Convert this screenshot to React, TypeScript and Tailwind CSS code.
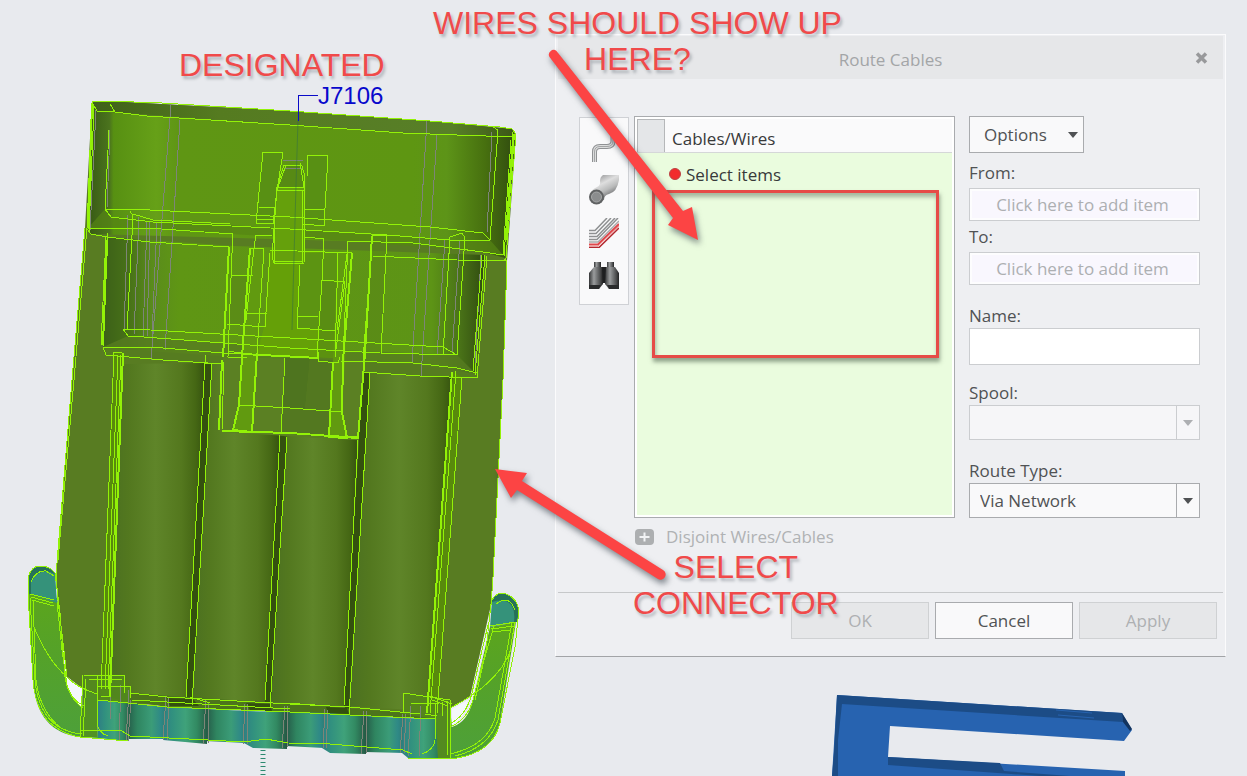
import { useState } from "react";
import type { ReactNode } from "react";

// front-facing edges of the connector, drawn in the highlight green
const EDGES = [
  // silhouette
  "M85 228 L72 380 L56 575 L58 600 L67 677 Q76 687 97 694",
  "M87 228 L74 380 L58 560",
  "M507 261 L503 380 L493 577 L491 605",
  // upper shell
  "M92 102 L106 101 L162 103 L290 111 L430 121 L500 127 L512 129 L516 134 L506 258 L504 261",
  "M92 102 L97 111 L115 112 L147 116 L290 125 L403 133 L457 135 L515 137",
  "M110 104 L115 112 M92 103 L87 229 L91 234 L107 237 L150 242 L229 247",
  "M94 106 L89 232 M88 228 L147 228 L233 234",
  "M110 104 L115 112 M109 130 L105 209 L111 217 L153 222 L290 229 L387 235 L450 240 L490 240 L498 130 L493 127",
  "M105 209 L130 209 L290 217 L430 227 L483 233 L490 240",
  "M513 132 L504 256 M511 140 L503 255",
  "M348 241 L413 243 L483 252 L503 255 M373 256 L457 260 L507 261",
  // lower shell
  "M108 233 L103 347 L106 355 L163 360 L223 364 M106 237 L101 345",
  "M103 347 L163 348 L223 353 L290 356 L318 358",
  "M130 211 L133 216 L127 330 M123 329 L128 336 L144 337 L290 348 L380 353 L457 355 L465 237",
  "M133 214 L153 220 L230 224 M123 329 L133 329 L290 338 L443 347 L457 355",
  "M450 237 L462 233 L465 238 M450 237 L443 355",
  "M485 255 L475 375 M482 255 L473 371 M487 256 L477 378 L420 376 L362 372 M340 361 L413 363 L457 368 L477 373",
  // latch window
  "M233 234 L232 253 L228 357 L247 358 M232 275 L253 276 M247 313 L267 313 M227 324 L265 327 L270 253 M228 351 L247 354",
  "M272 236 L256 235 L254 248 L246 320 M250 248 L264 249 L257 353 M270 250 L352 253",
  "M263 152 L283 153 L277 190 L273 224 L256 223 Z M259 207 L276 208 M256 219 L273 220",
  "M308 155 L328 156 L324 226 L303 224 M308 155 L307 177 M304 209 L325 210",
  "M284 165 L302 166 L305 177 L304 264 L274 263 L272 257 L277 187 Z M277 187 L304 188 M277 190 L304 190 M286 165 L278 187 M300 163 L304 187 M275 261 L303 262",
  "M274 225 L275 263 M302 190 L302 263 M305 237 L324 239 L322 280 L345 282 L335 357 M300 265 L297 328 L335 331 M298 316 L318 317 M322 280 L317 357",
  "M338 253 L335 358 M347 254 L337 330 M348 241 L343 360",
  "M318 352 L318 361 L338 363 L340 357 M387 235 L381 353 M372 235 L387 235 M371 256 L363 360",
  // latch housing
  "M224 362 L222 430 L358 437 M239 405 L290 408 L342 412",
  "M285 358 L281 433 M206 355 L205 363 L223 364",
  // bores
  "M114 352 L101 690 M118 355 L105 690 M121 355 L108 690 M113 352 L122 352 M101 696 L109 697",
  "M205 363 L186 697 M212 363 L192 705 M280 435 L265 700 M287 437 L270 708",
  "M358 440 L344 705 M370 373 L349 715 M456 371 L430 713 M462 377 L437 713",
  // foot rail
  "M98 700 L167 707 L290 712 L350 715 L435 719 M130 693 L167 697 L290 704 L350 707 L420 714",
  "M132 700 L290 709 M190 697 L210 703 M285 703 L330 706",
  "M80 730 L122 731 L130 736 L208 740 L244 742 L266 739 L288 743 L330 744 L403 750 L412 754",
  "M83 675 L124 676 L124 693 M83 675 L80 737 M86 679 L83 736 M97 675 L97 722 Q98 733 108 736 M101 679 L116 680",
  "M88 679 L122 680 M98 686 L131 686 L130 698 M109 676 L109 696",
  "M403 693 L450 700 L450 758 M403 693 L403 712 M411 703 L439 704 M436 704 L435 740 Q434 750 422 754 M447 701 L447 755 M425 714 L437 716",
  "M430 696 L452 704 M432 700 L448 706 M442 702 L442 716",
];

// edges that run double and read as one heavier line
const HEAVY_EDGES = [
  "M92 104 L88 228 M514 134 L506 240 M107 240 L103 345",
  "M229 247 L223 357 M250 248 L242 357 L239 405 L233 430 L252 432 L257 353",
  "M352 253 L343 360 L342 412 L347 438 L329 437 L333 362",
  "M243 354 L318 358 M222 431 L290 433 L358 438 L365 353 L372 236",
  "M222 360 L219 430 M123 353 L110 697 M452 372 L427 713",
];

const CLIP_EDGES = [
  "M28 578 Q31 566 40 566 Q50 566 55 573 L60 613 L65 677 Q68 698 83 708",
  "M28 578 L28 593 L33 680 Q36 716 57 728 Q67 735 80 737 L128 741",
  "M30 598 L35 680 Q38 714 59 727 Q70 733 82 734 M33 600 L36 680 Q40 712 62 729",
  "M57 602 L62 650 L67 685 Q71 700 84 706 M31 582 Q36 570 46 571 L54 576",
  "M30 594 L54 600 M31 597 L53 603 M32 600 L54 606 M34 627 Q48 661 67 677",
  "M492 600 Q496 593 503 593 Q516 596 519 610 L515 647 L500 723 Q493 752 457 758 L408 758",
  "M515 622 L498 720 Q489 748 455 756 M512 622 L495 718 Q487 746 450 754",
  "M491 604 L486 650 L473 700 Q467 720 450 727 M488 625 L471 697 Q465 716 451 723 M494 626 L484 660 L475 700",
  "M490 626 L516 622 M491 629 L514 626 M492 632 L511 630 M511 650 Q498 684 450 708 M496 604 Q509 594 515 610",
];

const SEAMS = [
  "M171 104 L151 360 M180 120 L165 350",
  "M147 222 L143 337 M150 222 L147 337 M157 222 L152 337 M139 217 L134 335",
  "M128 215 L124 330 M96 110 L90 230 M110 130 L107 208",
  "M427 120 L412 363 M437 135 L421 376 M445 240 L437 355 M460 240 L452 352 M492 132 L487 232 M481 255 L475 370",
  "M283 160 L303 161 M284 168 L302 169",
];

const RAIL_SEAMS = [
  "M111 690 L110 720 M121 685 L119 741 M131 700 L128 741 M129 690 L126 741 M166 697 L163 740 M169 698 L167 740 M206 700 L203 744 M209 702 L208 744",
  "M245 704 L243 744 M248 704 L247 745 M285 706 L282 748 M288 706 L287 748 M325 709 L323 748 M328 710 L326 748",
  "M364 711 L361 754 M367 711 L366 754 M403 714 L400 753 M406 714 L404 753 M411 706 L408 756 M421 706 L419 757",
];

const BORES = [
  "M123 364 L205 363 L186 699 L110 695 Z",
  "M212 364 L222 364 L219 432 L280 435 L265 702 L192 699 Z",
  "M287 436 L358 440 L344 706 L271 702 Z",
  "M370 373 L453 377 L427 711 L349 706 Z",
];

// protruding and recessed faces alternate along the rail
const LOBES = [
  "M98 700 L131 703 L128 741 L98 738 Z",
  "M166 707 L208 709 L207 744 L163 740 Z",
  "M246 711 L287 712 L287 749 L253 748 L244 743 Z",
  "M325 713 L366 716 L366 754 L330 753 L322 748 Z",
  "M404 718 L436 719 L445 758 L408 758 L402 753 Z",
];

const RECESSES = [
  "M130 703 L168 707 L165 739 L127 739 Z",
  "M207 709 L248 711 L245 743 L206 741 Z",
  "M286 712 L327 713 L324 748 L286 746 Z",
  "M365 716 L405 718 L404 753 L365 752 Z",
];

function Connector() {
  return (
    <svg width="555" height="776" viewBox="0 0 555 776" className="block" aria-label="Connector J7106">
      <defs>
        <linearGradient id="bore" x1="0" x2="1" y1="0" y2="0">
          <stop offset="0" stopColor="#4b7020" />
          <stop offset="0.2" stopColor="#53781f" />
          <stop offset="0.48" stopColor="#5f8529" />
          <stop offset="0.75" stopColor="#54781e" />
          <stop offset="0.9" stopColor="#456714" />
          <stop offset="1" stopColor="#355210" />
        </linearGradient>
        <linearGradient id="shell" x1="0" x2="1" y1="0" y2="0">
          <stop offset="0" stopColor="#375a14" />
          <stop offset="0.05" stopColor="#4b731e" />
          <stop offset="0.06" stopColor="#579012" />
          <stop offset="0.16" stopColor="#66a018" />
          <stop offset="0.21" stopColor="#5f9614" />
          <stop offset="0.76" stopColor="#5e9612" />
          <stop offset="0.84" stopColor="#5d9418" />
          <stop offset="0.93" stopColor="#47700f" />
          <stop offset="1" stopColor="#314c10" />
        </linearGradient>
        <linearGradient id="shellLow" x1="0" x2="1" y1="0" y2="0">
          <stop offset="0" stopColor="#3c6018" />
          <stop offset="0.07" stopColor="#487218" />
          <stop offset="0.13" stopColor="#5a8c1c" />
          <stop offset="0.2" stopColor="#5f9614" />
          <stop offset="0.86" stopColor="#5d9416" />
          <stop offset="0.93" stopColor="#4b7518" />
          <stop offset="1" stopColor="#304b10" />
        </linearGradient>
        <linearGradient id="rim" x1="0" x2="1" y1="0" y2="0">
          <stop offset="0" stopColor="#40601c" />
          <stop offset="0.05" stopColor="#42641a" />
          <stop offset="0.3" stopColor="#557b20" />
          <stop offset="0.85" stopColor="#587f28" />
          <stop offset="1" stopColor="#3b5716" />
        </linearGradient>
        <linearGradient id="lobe" x1="0" x2="1" y1="0" y2="0">
          <stop offset="0" stopColor="#2f7f84" />
          <stop offset="0.2" stopColor="#31907f" />
          <stop offset="0.5" stopColor="#3fa27a" />
          <stop offset="0.75" stopColor="#328a62" />
          <stop offset="1" stopColor="#255844" />
        </linearGradient>
        <linearGradient id="recess" x1="0" x2="1" y1="0" y2="0">
          <stop offset="0" stopColor="#255a48" />
          <stop offset="0.25" stopColor="#2f8560" />
          <stop offset="0.6" stopColor="#3b9c78" />
          <stop offset="0.82" stopColor="#2f8986" />
          <stop offset="1" stopColor="#2b7870" />
        </linearGradient>
        <linearGradient id="clip" x1="0" x2="0" y1="0" y2="1">
          <stop offset="0" stopColor="#5ca51c" />
          <stop offset="0.4" stopColor="#55a228" />
          <stop offset="1" stopColor="#4da03a" />
        </linearGradient>
      </defs>

      {/* body */}
      <path fill="#587c22" d="M92 102 L106 101 L290 111 L430 121 L512 129 L516 134 L507 261 L503 380 L493 577 L491 605 L470 697 L450 708 L435 719 L98 702 L67 677 L58 600 L56 575 L72 380 L85 228 Z" />
      <path fill="url(#rim)" d="M92 102 L106 101 L290 111 L430 121 L512 129 L516 137 L457 135 L290 125 L97 111 Z" />
      <path fill="url(#shell)" d="M92 104 L97 111 L147 116 L290 125 L403 133 L457 135 L515 137 L505 258 L483 252 L413 243 L91 234 L88 228 Z" />
      <path fill="#568414" d="M88 228 L105 209 L111 217 L290 229 L450 240 L490 240 L504 256 L483 252 L348 241 L233 234 L147 228 Z" opacity="0.7" />
      <path fill="url(#shellLow)" d="M107 237 L233 246 L348 250 L485 255 L476 374 L413 364 L223 356 L103 348 Z" />
      <path fill="#567c20" d="M103 347 L128 336 L290 348 L457 355 L476 374 L478 378 L362 372 L223 364 L106 355 Z" opacity="0.8" />
      <path fill="#588417" d="M232 276 L250 276 L247 325 L228 324 Z M372 240 L387 240 L381 353 L366 353 Z" opacity="0.5" />

      {/* bores and the slots between them */}
      <path fill="#34510f" d="M203 363 L214 363 L193 706 L185 700 Z M278 435 L289 437 L271 708 L264 702 Z M363 372 L371 373 L350 714 L343 705 Z" />
      {BORES.map((d) => <path key={d} d={d} fill="url(#bore)" />)}
      <path fill="#588a0c" d="M114 352 L123 353 L110 697 L101 695 Z M453 372 L462 377 L437 715 L427 713 Z" />

      {/* latch */}
      <path fill="#5b8023" d="M223 357 L365 360 L358 440 L219 432 Z" />
      <path fill="#4b701e" d="M285 358 L310 359 L305 410 L283 408 Z" opacity="0.8" />
      <path fill="#537820" d="M310 359 L333 360 L329 437 L281 433 L283 408 L305 410 Z" />
      <path fill="#65a008" d="M270 250 L338 253 L335 358 L257 354 L264 327 Z" />
      <path fill="#5c9412" d="M300 253 L338 253 L335 331 L297 328 Z" />
      <path fill="#588a14" d="M322 281 L345 283 L337 358 L318 357 Z" opacity="0.7" />
      <path fill="#589014" d="M263 152 L283 153 L273 224 L256 223 Z M308 155 L328 156 L324 226 L304 224 Z" />
      <path fill="#65a00c" d="M277 187 L304 187 L304 264 L274 263 Z" />
      <path fill="#578a14" d="M284 165 L302 166 L304 187 L278 187 Z" />
      <path fill="#619a10" d="M250 248 L265 250 L257 355 L252 432 L233 430 L239 405 L242 357 Z M338 253 L350 253 L345 360 L342 412 L347 438 L329 437 L333 360 Z" />

      {/* foot rail */}
      <path fill="#4d741c" d="M98 696 L130 693 L290 704 L420 714 L435 719 L350 715 L167 707 Z" />
      <path fill="#33500f" d="M167 698 L193 699 L199 706 L170 706 Z M246 703 L270 704 L272 711 L250 710 Z M326 707 L347 708 L349 714 L328 713 Z" />
      {RECESSES.map((d) => <path key={d} d={d} fill="url(#recess)" />)}
      {LOBES.map((d) => <path key={d} d={d} fill="url(#lobe)" />)}

      {/* side clips */}
      <path fill="url(#clip)" d="M28 590 L57 598 L60 613 L65 677 Q68 698 83 708 L83 688 L97 694 L98 738 L80 737 Q36 732 33 680 Z" />
      <path fill="#35927a" d="M28 578 Q31 566 40 566 Q50 566 55 573 L57 603 L28 593 Z" />
      <path fill="#267159" d="M28 578 Q31 566 40 566 Q50 566 55 574 Q40 566 31 582 L31 595 L28 593 Z" />
      <path fill="url(#clip)" d="M490 627 L516 622 L500 723 Q493 752 457 758 L438 758 L436 716 L450 708 L452 727 Q468 722 473 700 Z" />
      <path fill="#35927a" d="M492 600 Q496 593 503 593 Q516 596 519 610 L517 622 L490 627 Z" />
      <path fill="#267159" d="M492 600 Q496 593 503 593 Q516 596 519 610 L517 622 L514 622 Q517 595 492 602 Z" />
      <path fill="#538c1e" d="M83 675 L124 676 L124 686 L131 686 L130 704 L97 700 L97 737 L80 737 Z" opacity="0.75" />
      <path fill="#55861c" d="M403 693 L450 700 L450 758 L438 758 L436 719 L403 714 Z" opacity="0.85" />
      <path fill="#f4f7fb" d="M66 676 L82 688 L81 706 Q68 697 66 676 Z M452 709 L468 700 Q465 718 452 725 Z" />

      <g fill="none" stroke="#7d8578" strokeWidth="1" shapeRendering="crispEdges">
        {SEAMS.map((d) => <path key={d} d={d} />)}
        {RAIL_SEAMS.map((d) => <path key={d} d={d} />)}
      </g>
      <g fill="none" stroke="#93f207" strokeWidth="1" shapeRendering="crispEdges">
        {EDGES.map((d) => <path key={d} d={d} />)}
        {CLIP_EDGES.map((d) => <path key={d} d={d} />)}
      </g>
      <g fill="none" stroke="#93f207" strokeWidth="2" shapeRendering="crispEdges">
        {HEAVY_EDGES.map((d) => <path key={d} d={d} />)}
      </g>
      <path d="M263 750 V776" stroke="#2c8a70" strokeWidth="5" strokeDasharray="1 3" />

      {/* reference designator */}
      <path d="M298 120 L296 185 L292 330" fill="none" stroke="#2f6a4a" strokeWidth="1" strokeOpacity="0.5" />
      <path d="M298 121 V95 H318" fill="none" stroke="#0a0ac8" strokeWidth="1" shapeRendering="crispEdges" />
      <text x="318" y="104" fontSize="24" fill="#0808cc" fontFamily="Liberation Sans, Arial, sans-serif">J7106</text>
    </svg>
  );
}

function BlueBracket() {
  return (
    <svg width="301" height="81" viewBox="832 695 301 81" className="block" aria-hidden="true">
      <path fill="#2763b0" d="M837 695 L1122 713 L1132 730 L1124 741 L890 726 L888 757 L1125 771 V776 H832 Z" />
      <path fill="#1c4c86" d="M837 695 L1122 713 L1123 722 L842 704 L838 740 L838 776 L832 776 L834 752 Z M888 757 L1000 763 L1004 771 L1070 776 H1040 L888 765 Z" />
      <path fill="#12345f" d="M1122 713 L1132 729 L1130 731 L1123 722 Z" />
      <path stroke="#2763b0" d="M1056 710 L1092 713 M1058 715 L1094 718" />
    </svg>
  );
}

function Icon({ children }: { children: ReactNode }) {
  return <svg width="30" height="30" viewBox="0 0 30 30" aria-hidden="true">{children}</svg>;
}

function CableIcon() {
  return (
    <Icon>
      <path d="M5.500 31 V20 Q5.500 14.500 11 14.500 H18 Q24 14.500 24 9 V0" fill="none" stroke="#8f9193" strokeWidth="5" />
      <path d="M5.500 31 V20 Q5.500 14.500 11 14.500 H18 Q24 14.500 24 9 V0" fill="none" stroke="#dcdddd" strokeWidth="3" />
      <path d="M5.500 31 V20 Q5.500 14.500 11 14.500 H18 Q24 14.500 24 9 V0" fill="none" stroke="#a3a5a6" strokeWidth="1" />
    </Icon>
  );
}

function PipeIcon() {
  return (
    <Icon>
      <defs>
        <linearGradient id="pipe" x1="0.2" x2="0.8" y1="0" y2="1">
          <stop offset="0" stopColor="#8d8e8f" />
          <stop offset="0.35" stopColor="#dedede" />
          <stop offset="0.6" stopColor="#b9baba" />
          <stop offset="0.85" stopColor="#6f7071" />
        </linearGradient>
      </defs>
      <path fill="url(#pipe)" d="M14 0 H30 V5 Q28 17 20 19 Q15 20 15 25 L1 19 Q3 14 8 12 Q12 10 11 6 Q11 2 14 0 Z" />
      <circle cx="7.500" cy="22" r="7.500" fill="#606263" />
      <circle cx="7.500" cy="22" r="5" fill="#8b8d8e" stroke="#a6a8a8" />
    </Icon>
  );
}

function HarnessIcon() {
  return (
    <Icon>
      <g fill="none" strokeWidth="1.500">
        <path stroke="#8e9091" d="M0 12.500 H6 L18 0 M0 15.500 H7 L22 0 M0 18.500 H8 L26 0 M0 21.500 H8 L29 0" />
        <path stroke="#a8aaab" d="M0 24 H9 L30 3" />
        <path stroke="#e0474b" strokeWidth="2" d="M0 26.500 H9 L30 6" />
        <path stroke="#f29a9a" strokeWidth="1" d="M0 28 H9 L30 8" />
        <path stroke="#b3262c" d="M0 29.500 H10 L30 10" />
      </g>
    </Icon>
  );
}

function BinocularsIcon() {
  return (
    <Icon>
      <defs>
        <linearGradient id="barrel" x1="0" x2="1" y1="0" y2="0">
          <stop offset="0" stopColor="#353637" />
          <stop offset="0.35" stopColor="#9a9c9d" />
          <stop offset="0.8" stopColor="#4c4d4e" />
          <stop offset="1" stopColor="#222" />
        </linearGradient>
      </defs>
      <path fill="url(#barrel)" d="M5 1 H12 V6 H5 Z" />
      <path fill="url(#barrel)" d="M18 1 H25 V6 H18 Z" />
      <path fill="#1e1f20" d="M11 6 H19 V22 H11 Z" />
      <path fill="url(#barrel)" d="M5 6 H13 L14 23 L10 28 H0 V12 Z" />
      <path fill="url(#barrel)" d="M17 6 H26 L30 12 V28 H20 L16 23 Z" />
      <path fill="#2a2b2c" d="M0 24 H12 L10 28 H0 Z M18 24 H30 V28 H20 Z" />
    </Icon>
  );
}

function Caret() {
  return (
    <svg width="10" height="6" viewBox="0 0 10 6" aria-hidden="true">
      <path d="M0 0 H10 L5 6 Z" fill="currentColor" />
    </svg>
  );
}

const TOOLS = [
  { label: "Route cable", icon: <CableIcon /> },
  { label: "Route pipe", icon: <PipeIcon /> },
  { label: "Route harness", icon: <HarnessIcon /> },
  { label: "Find", icon: <BinocularsIcon /> },
];

function Collector({ id, label, className }: { id: string; label: string; className: string }) {
  return (
    <div className={className}>
      <label htmlFor={id} className="block pb-[3px] leading-6">{label}</label>
      <button id={id} type="button" className="block h-[33px] w-full border border-[#cbcdd0] bg-[#f9f7fe] pr-1 text-[#adafb2] shadow-[inset_0_0_0_2px_#fdfdfe]">
        Click here to add item
      </button>
    </div>
  );
}

function RouteCablesDialog() {
  const [name, setName] = useState("");

  return (
    <div
      role="dialog"
      aria-label="Route Cables"
      className="border border-[#fbfbfc] border-b-[#a2a4a7] bg-[#eeeff2] text-[17px] text-[#505254]"
    >
      <header className="relative mx-[2px] mt-px flex h-[43px] items-center justify-center bg-[#e6e7e9] text-[#a3a5a7]">
        <h1 className="pt-1">Route Cables</h1>
        <button type="button" aria-label="Close" className="absolute right-[15px] top-4">
          <svg width="13" height="12" viewBox="0 0 13 12" aria-hidden="true">
            <path d="M2 1.500 L11 10.500 M11 1.500 L2 10.500" stroke="#98999b" strokeWidth="3.500" />
          </svg>
        </button>
      </header>

      <div className="flex items-start pl-[23px] pr-[25px] pt-[37px]">
        <div className="mt-px flex w-[50px] shrink-0 flex-col items-center gap-[13px] border border-[#cfd1d5] bg-[#f9f9fa] pb-[13px] pt-[14px]">
          {TOOLS.map((t) => (
            <button key={t.label} type="button" aria-label={t.label}>{t.icon}</button>
          ))}
        </div>

        <div className="ml-[5px] min-w-0 flex-1">
          <div className="flex h-[402px] flex-col border border-[#a9abae] bg-white p-[2px] text-[#38393a]">
            <div className="flex h-[34px] border-b border-[#d5d7d8] bg-[#fafafb]">
              <span className="w-7 border border-b-0 border-[#b5b7b9] bg-[#e4e6e8]" />
              <span className="pl-[7px] pt-2 leading-6">Cables/Wires</span>
            </div>
            <div className="flex-1 bg-[#eafcde] pl-8 pt-[10px]">
              <div className="flex items-start gap-[5px] leading-6">
                <span className="mt-[5px] h-3 w-3 rounded-full border border-[#b44] bg-[#f22c2c]" />
                Select items
              </div>
            </div>
          </div>
          <button type="button" disabled className="mt-[7px] flex items-center gap-3 pl-px leading-6 text-[#b0b2b4]">
            <svg width="19" height="17" viewBox="0 0 19 17" aria-hidden="true">
              <rect width="19" height="16" rx="4" fill="#adafb1" />
              <path d="M9.500 3.500 V12.500 M4.500 8 H14.500" stroke="#f2f3f5" strokeWidth="2" />
            </svg>
            Disjoint Wires/Cables
          </button>
        </div>

        <div className="ml-[14px] w-[231px] shrink-0">
          <button type="button" className="flex h-[37px] w-[115px] items-center justify-between border border-[#a9abae] bg-[#f9f9fa] pl-[14px] pr-[5px]">
            Options
            <Caret />
          </button>
          <Collector id="from" label="From:" className="mt-2" />
          <Collector id="to" label="To:" className="mt-1" />
          <label htmlFor="name" className="mt-[19px] block leading-6">Name:</label>
          <input
            id="name"
            value={name}
            onChange={(e) => setName(e.target.value)}
            className="block h-[37px] w-full border border-[#cbcdd0] bg-white px-[10px]"
          />
          <label htmlFor="spool" className="mt-4 block leading-6">Spool:</label>
          <div className="relative">
            <select id="spool" disabled className="block h-[35px] w-full appearance-none border border-[#cbcdd0] bg-[#f6f6f8] px-[10px]" />
            <span className="pointer-events-none absolute inset-y-0 right-0 flex w-6 items-center justify-center border border-[#cbcdd0] text-[#adafb2]">
              <Caret />
            </span>
          </div>
          <label htmlFor="route-type" className="mt-[19px] block leading-6">Route Type:</label>
          <div className="relative">
            <select id="route-type" className="block h-[35px] w-full appearance-none border border-[#a9abae] bg-[#f9f9fa] px-[10px]">
              <option>Via Network</option>
            </select>
            <span className="pointer-events-none absolute inset-y-0 right-0 flex w-6 items-center justify-center border border-[#a9abae]">
              <Caret />
            </span>
          </div>
        </div>
      </div>

      <footer className="mx-[2px] mt-[43px] flex justify-end gap-[6px] border-t border-[#c6c8ca] pb-[17px] pr-[6px] pt-[9px]">
        <button type="button" disabled className="h-[37px] w-[138px] border border-[#cfd1d3] bg-[#e6e7e9] text-[#aeb0b2]">OK</button>
        <button type="button" className="h-[37px] w-[138px] border border-[#a9abae] bg-[#f9f9fa]">Cancel</button>
        <button type="button" disabled className="h-[37px] w-[138px] border border-[#cfd1d3] bg-[#e6e7e9] text-[#aeb0b2]">Apply</button>
      </footer>
    </div>
  );
}

// red markup laid over the whole scene
function Markup() {
  const note = "absolute whitespace-nowrap text-center font-['Liberation_Sans',Arial,sans-serif] text-[32px] leading-9 text-[#f04a4a] [text-shadow:2px_3px_3px_rgba(90,100,110,0.4)]";
  return (
    <div className="pointer-events-none absolute inset-0">
      <div className="absolute left-[652px] top-[190px] h-[168px] w-[287px] border-3 border-[#e64b47] shadow-[1px_4px_4px_rgba(60,80,60,0.5),inset_1px_4px_4px_rgba(60,80,60,0.4)]" />
      <p className={`${note} left-[179px] top-[47px]`}>DESIGNATED</p>
      <p className={`${note} left-[433px] top-[5px]`}>WIRES SHOULD SHOW UP<br />HERE?</p>
      <p className={`${note} left-[633px] top-[549px]`}>SELECT<br />CONNECTOR</p>
      <svg width="1247" height="776" viewBox="0 0 1247 776" className="absolute left-0 top-0 drop-shadow-[2px_4px_3px_rgba(50,60,70,0.6)]" aria-hidden="true">
        <g fill="#fc4444">
          <path d="M556.500 51 L683 211 L692 207 L698 240 L668 225 L673 218 L549.500 57 A4.700 4.700 0 0 1 556.500 51 Z" />
          <path d="M495 469 L527 473 L522 481 L663 570 A5 5 0 0 1 658 579 L517 490 L511 498 Z" />
        </g>
      </svg>
    </div>
  );
}

export default function App() {
  return (
    <main className="relative flex min-h-screen overflow-hidden bg-[#e8eaee] font-['Open_Sans','Noto_Sans',sans-serif]">
      <div className="w-[555px] shrink-0">
        <Connector />
      </div>
      <div className="min-w-0 flex-1 pr-[21px] pt-[34px]">
        <RouteCablesDialog />
        <div className="pl-[277px] pt-[38px]">
          <BlueBracket />
        </div>
      </div>
      <Markup />
    </main>
  );
}
